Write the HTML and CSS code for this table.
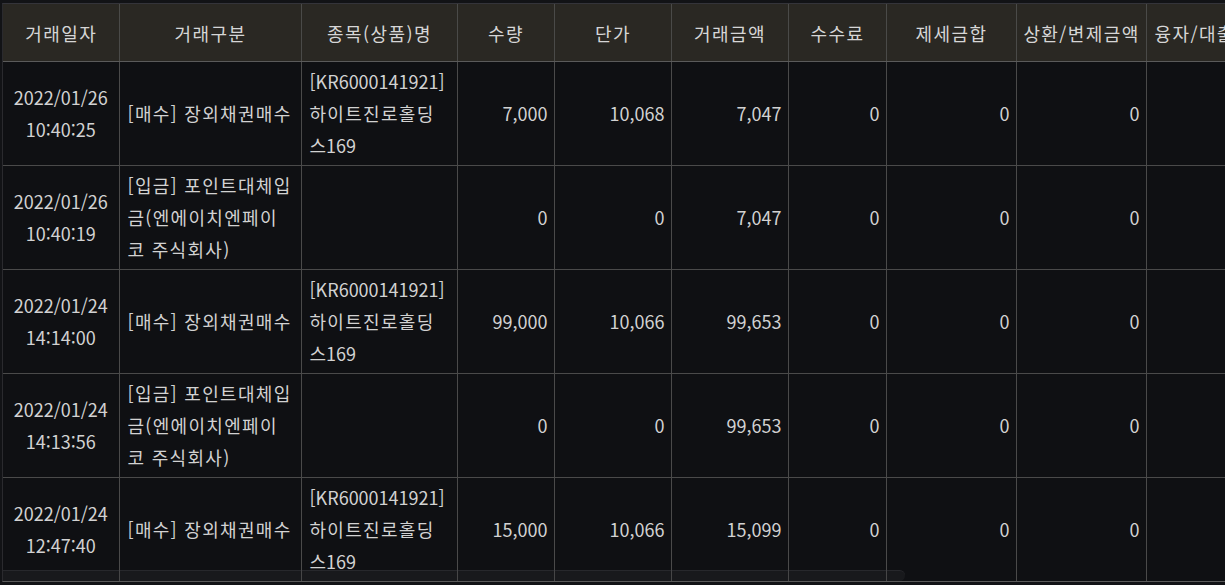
FILE: index.html
```html
<!DOCTYPE html>
<html lang="ko">
<head>
<meta charset="utf-8">
<title>거래내역</title>
<link rel="stylesheet" href="styles.css">
</head>
<body>
<div class="grid">
  <table class="tx">
    <colgroup>
      <col class="c-date"><col class="c-type"><col class="c-name"><col class="c-qty"><col class="c-price"><col class="c-amt"><col class="c-fee"><col class="c-tax"><col class="c-repay"><col class="c-loan">
    </colgroup>
    <thead>
      <tr>
        <th>거래일자</th><th>거래구분</th><th>종목(상품)명</th><th>수량</th><th>단가</th><th>거래금액</th><th>수수료</th><th>제세금합</th><th>상환/변제금액</th><th>융자/대출금</th>
      </tr>
    </thead>
    <tbody>
      <tr>
        <td class="date">2022/01/26<br>10:40:25</td>
        <td class="txt"><span class="ko">[매수] 장외채권매수</span></td>
        <td class="txt">[KR6000141921]<br><span class="ko">하이트진로홀딩</span><br>스169</td>
        <td class="num">7,000</td><td class="num">10,068</td><td class="num">7,047</td><td class="num">0</td><td class="num">0</td><td class="num">0</td><td class="num"></td>
      </tr>
      <tr>
        <td class="date">2022/01/26<br>10:40:19</td>
        <td class="txt"><span class="ko">[입금] 포인트대체입<br>금(엔에이치엔페이<br>코 주식회사)</span></td>
        <td class="txt"></td>
        <td class="num">0</td><td class="num">0</td><td class="num">7,047</td><td class="num">0</td><td class="num">0</td><td class="num">0</td><td class="num"></td>
      </tr>
      <tr>
        <td class="date">2022/01/24<br>14:14:00</td>
        <td class="txt"><span class="ko">[매수] 장외채권매수</span></td>
        <td class="txt">[KR6000141921]<br><span class="ko">하이트진로홀딩</span><br>스169</td>
        <td class="num">99,000</td><td class="num">10,066</td><td class="num">99,653</td><td class="num">0</td><td class="num">0</td><td class="num">0</td><td class="num"></td>
      </tr>
      <tr>
        <td class="date">2022/01/24<br>14:13:56</td>
        <td class="txt"><span class="ko">[입금] 포인트대체입<br>금(엔에이치엔페이<br>코 주식회사)</span></td>
        <td class="txt"></td>
        <td class="num">0</td><td class="num">0</td><td class="num">99,653</td><td class="num">0</td><td class="num">0</td><td class="num">0</td><td class="num"></td>
      </tr>
      <tr>
        <td class="date">2022/01/24<br>12:47:40</td>
        <td class="txt"><span class="ko">[매수] 장외채권매수</span></td>
        <td class="txt">[KR6000141921]<br><span class="ko">하이트진로홀딩</span><br>스169</td>
        <td class="num">15,000</td><td class="num">10,066</td><td class="num">15,099</td><td class="num">0</td><td class="num">0</td><td class="num">0</td><td class="num"></td>
      </tr>
    </tbody>
  </table>
  <div class="hscroll"></div>
</div>
</body>
</html>
```
FILE: styles.css
```css
html, body {
  margin: 0;
  padding: 0;
  background: #121316;
  overflow: hidden;
}

body {
  padding: 3px 0 0 2px;
  font-family: "Noto Sans CJK KR", "Noto Sans", sans-serif;
  font-size: 18px;
  color: #d2d2d2;
}

.grid {
  position: relative;
  width: 1260px;
  height: 577px;
  overflow: hidden;
  border-top: 1px solid #34343a;
  border-left: 1px solid #2a2a2e;
  border-bottom: 1px solid #5a5a5a;
  background: #0f1013;
}

.tx {
  border-collapse: collapse;
  table-layout: fixed;
  width: 1260px;
}

.c-date { width: 116px; }
.c-type { width: 182px; }
.c-name { width: 156px; }
.c-qty { width: 97px; }
.c-price { width: 117px; }
.c-amt { width: 117px; }
.c-fee { width: 98px; }
.c-tax { width: 130px; }
.c-repay { width: 130px; }
.c-loan { width: 117px; }

.tx th {
  height: 57px;
  padding: 0 0 0 1px;
  background: #2a2823;
  color: #d6d6d6;
  font-weight: normal;
  letter-spacing: 1.4px;
  text-align: center;
  white-space: nowrap;
  overflow: hidden;
  border-left: 1px solid #4a4a48;
  border-bottom: 1px solid #5a5a5a;
}

.tx th:last-child {
  text-align: left;
  padding-left: 8px;
}

.tx th:first-child,
.tx td:first-child {
  border-left: none;
}

.tx td {
  height: 96px;
  padding: 3px 6px 4px 7px;
  line-height: 32px;
  vertical-align: middle;
  border-left: 1px solid #4a4a4a;
  border-bottom: 1px solid #4a4a4a;
  white-space: nowrap;
}

.tx td.date {
  text-align: center;
  padding: 3px 0 4px;
}

.tx td.txt {
  text-align: left;
  padding-left: 8px;
}

.tx td.num {
  text-align: right;
}

.ko {
  letter-spacing: 1.3px;
}

.hscroll {
  position: absolute;
  left: -1px;
  bottom: 0;
  width: 903px;
  height: 10px;
  border-radius: 0 6px 6px 0;
  background: rgba(60, 60, 64, 0.22);
  border-top: 1px solid rgba(70, 70, 74, 0.35);
}
```
